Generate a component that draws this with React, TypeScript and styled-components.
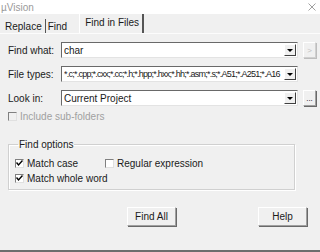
import React from 'react';
import styled, { createGlobalStyle } from 'styled-components';

const Global = createGlobalStyle`
  html, body {
    margin: 0;
    padding: 0;
    background: #f0f0f0;
  }
  body {
    font-family: "Liberation Sans", Arial, sans-serif;
    font-size: 10px;
    color: #1a1a1a;
  }
`

const Window = styled.div`
  width: 320px;
  height: 252px;
  display: flex;
  flex-direction: column;
  background: #f0f0f0;
  border-bottom: 2px solid #6d6d6d;
  box-sizing: border-box;
  overflow: hidden;
`

const TitleBar = styled.div`
  height: 14px;
  background: #fff;
  display: flex;
  align-items: center;
  justify-content: space-between;
  padding: 0 4px 0 1px;
  color: #9a9a9a;
  font-size: 10px;
`

const Title = styled.span`
  margin-top: 1px;
`

const TabStrip = styled.div`
  height: 19px;
  display: flex;
  align-items: flex-end;
  padding-left: 3px;
  border-bottom: 1px solid #fcfcfc;
`

const Tab = styled.div<{ $active?: boolean; $sep?: boolean }>`
  height: ${p => (p.$active ? '19px' : '14px')};
  display: flex;
  align-items: center;
  padding: ${p => (p.$active ? '0 3px 3px 5px' : '0 3px 0 2px')};
  margin-left: ${p => (p.$active ? '8px' : '0')};
  border-right: 1px solid ${p => (p.$sep ? '#555' : 'transparent')};
  ${p => p.$active && 'border-right: 2px solid #555; border-left: 1px solid #fff;'}
  box-sizing: border-box;
`

const Body = styled.div`
  flex: 1;
  display: flex;
  flex-direction: column;
  padding: 8px 4px 0 8px;
`

const Row = styled.div<{ $gap?: number }>`
  display: flex;
  align-items: center;
  height: 16px;
  margin-bottom: ${p => p.$gap ?? 8}px;
`

const Label = styled.span`
  width: 53px;
  flex: none;
`

const Combo = styled.div`
  width: 237px;
  height: 16px;
  box-sizing: border-box;
  background: #fff;
  border-top: 1px solid #696969;
  border-left: 1px solid #696969;
  border-right: 1px solid #e3e3e3;
  border-bottom: 1px solid #e3e3e3;
  display: flex;
  align-items: center;
  padding-left: 2px;
  flex: none;
`

const ComboText = styled.span<{ $tight?: boolean }>`
  flex: 1;
  white-space: nowrap;
  overflow: hidden;
  ${p => p.$tight && 'font-size: 9px; letter-spacing: -0.75px;'}
`

const DropButton = styled.div`
  width: 12px;
  height: 12px;
  margin-right: 1px;
  box-sizing: border-box;
  background: #f0f0f0;
  border-right: 1px solid #404040;
  border-bottom: 1px solid #404040;
  border-top: 1px solid #fff;
  border-left: 1px solid #fff;
  display: flex;
  align-items: center;
  justify-content: center;
  flex: none;
`

const Arrow = styled.span`
  width: 0;
  height: 0;
  border-left: 3px solid transparent;
  border-right: 3px solid transparent;
  border-top: 3px solid #000;
`

const SmallButton = styled.div<{ $disabled?: boolean }>`
  width: 15px;
  height: 16px;
  margin-left: 5px;
  box-sizing: border-box;
  border-top: 1px solid #fff;
  border-left: 1px solid #fff;
  border-right: 1px solid #a0a0a0;
  border-bottom: 1px solid #a0a0a0;
  box-shadow: 1px 1px 0 #696969;
  display: flex;
  align-items: center;
  justify-content: center;
  font-size: 8px;
  color: ${p => (p.$disabled ? '#c0c0c0' : '#000')};
  ${p => p.$disabled && 'box-shadow: 1px 1px 0 #bdbdbd; border-right-color: #d0d0d0; border-bottom-color: #d0d0d0;'}
`

const CheckRow = styled.div<{ $disabled?: boolean }>`
  display: flex;
  align-items: center;
  gap: 3px;
  white-space: nowrap;
  color: ${p => (p.$disabled ? '#a0a0a0' : '#1a1a1a')};
`

const Box = styled.span<{ $disabled?: boolean }>`
  width: 9px;
  height: 9px;
  box-sizing: border-box;
  background: ${p => (p.$disabled ? '#f0f0f0' : '#fff')};
  border-top: 1px solid #808080;
  border-left: 1px solid #808080;
  border-right: 1px solid #e0e0e0;
  border-bottom: 1px solid #e0e0e0;
  display: flex;
  align-items: center;
  justify-content: center;
  flex: none;
`

const Group = styled.fieldset`
  margin: 17px 0 0 0;
  width: 287px;
  height: 51px;
  box-sizing: border-box;
  border: 1px solid #d0d0d0;
  box-shadow: inset 1px 1px 0 #fff, 1px 1px 0 #fff;
  padding: 6px 0 0 6px;
  display: grid;
  grid-template-columns: 90px auto;
  grid-auto-rows: 15px;
  align-content: start;
`

const Legend = styled.legend`
  padding: 0 1px;
  margin-left: 3px;
`

const ButtonBar = styled.div`
  display: flex;
  margin-top: 17px;
  padding-left: 119px;
  gap: 82px;
`

const Button = styled.div`
  width: 49px;
  height: 19px;
  box-sizing: border-box;
  border-top: 1px solid #fff;
  border-left: 1px solid #fff;
  border-right: 1px solid #a0a0a0;
  border-bottom: 1px solid #a0a0a0;
  box-shadow: 1px 1px 0 #696969;
  display: flex;
  align-items: center;
  justify-content: center;
`

const Check = () => (
  <svg width="7" height="7" viewBox="0 0 7 7">
    <path d="M0.5 2.5 L2.5 5 L6.5 0.5" stroke="#000" strokeWidth="1.4" fill="none" />
  </svg>
)

const Checkbox: React.FC<{ label: string; checked?: boolean; disabled?: boolean }> = ({ label, checked, disabled }) => (
  <CheckRow $disabled={disabled}>
    <Box $disabled={disabled}>{checked && <Check />}</Box>
    <span>{label}</span>
  </CheckRow>
)

const ComboBox: React.FC<{ value: string; tight?: boolean }> = ({ value, tight }) => (
  <Combo>
    <ComboText $tight={tight}>{value}</ComboText>
    <DropButton>
      <Arrow />
    </DropButton>
  </Combo>
)

const App: React.FC = () => {
  return (
    <Window>
      <Global />
      <TitleBar>
        <Title>µVision</Title>
        <svg width="8" height="8" viewBox="0 0 8 8">
          <path d="M0.5 0.5 L7.5 7.5 M7.5 0.5 L0.5 7.5" stroke="#a0a0a0" strokeWidth="1" />
        </svg>
      </TitleBar>
      <TabStrip>
        <Tab $sep>Replace</Tab>
        <Tab>Find</Tab>
        <Tab $active>Find in Files</Tab>
      </TabStrip>
      <Body>
        <Row>
          <Label>Find what:</Label>
          <ComboBox value="char" />
          <SmallButton $disabled>&gt;</SmallButton>
        </Row>
        <Row>
          <Label>File types:</Label>
          <ComboBox tight value="*.c;*.cpp;*.cxx;*.cc;*.h;*.hpp;*.hxx;*.hh;*.asm;*.s;*.A51;*.A251;*.A16" />
        </Row>
        <Row $gap={5}>
          <Label>Look in:</Label>
          <ComboBox value="Current Project" />
          <SmallButton>...</SmallButton>
        </Row>
        <Checkbox label="Include sub-folders" disabled />
        <Group>
          <Legend>Find options</Legend>
          <Checkbox label="Match case" checked />
          <Checkbox label="Regular expression" />
          <Checkbox label="Match whole word" checked />
        </Group>
        <ButtonBar>
          <Button>Find All</Button>
          <Button>Help</Button>
        </ButtonBar>
      </Body>
    </Window>
  );
};

export default App;
